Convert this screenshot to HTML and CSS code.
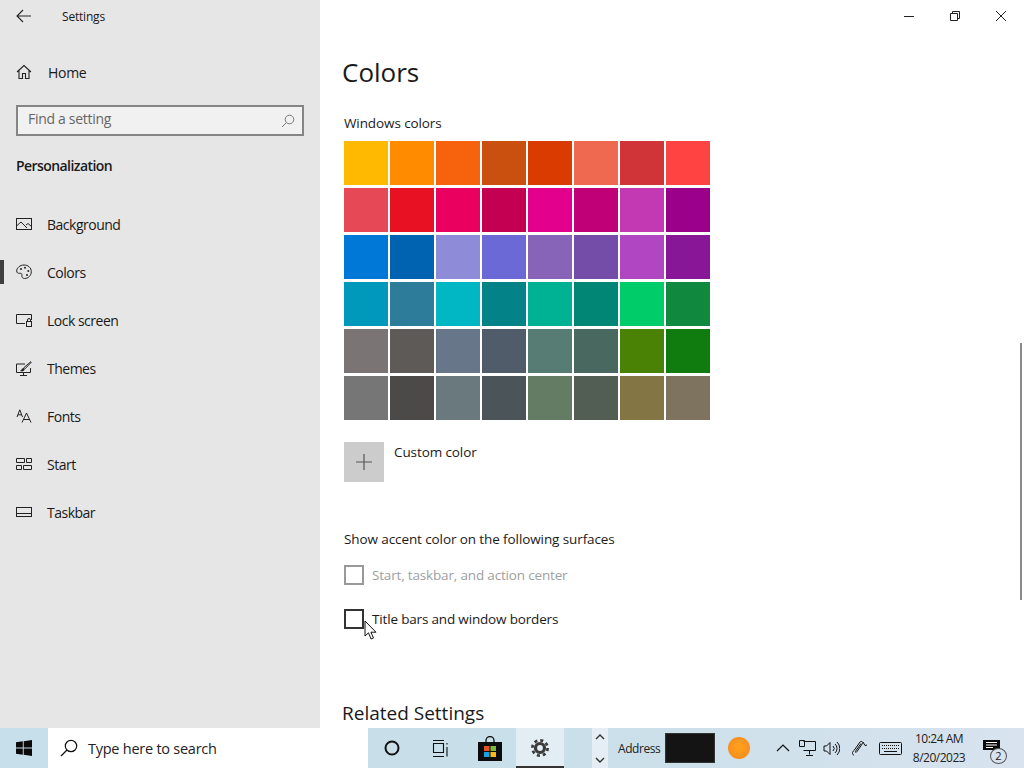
FILE: index.html
```html
<!DOCTYPE html>
<html lang="en">
<head>
<meta charset="utf-8">
<title>Settings</title>
<link rel="stylesheet" href="styles.css">
</head>
<body>
<div class="screen">
  <div class="window">
    <aside class="sidebar">
      <div class="appbar">
        <svg class="back" width="16" height="14" viewBox="0 0 16 14"><path d="M7 1 1 7l6 6M1 7h14" fill="none" stroke="#222" stroke-width="1.1"/></svg>
        <span class="apptitle">Settings</span>
      </div>
      <div class="nav-row home">
        <svg class="ico" width="16" height="16" viewBox="0 0 16 16"><path d="M1 8 8 1.500 15 8M3 6.500V14.500h3.500V9.500h3V14.500H13V6.500" fill="none" stroke="#222" stroke-width="1.1"/></svg>
        <span>Home</span>
      </div>
      <div class="search">
        <span class="search-text">Find a setting</span>
        <svg width="14" height="14" viewBox="0 0 14 14"><circle cx="8.500" cy="5.500" r="4.300" fill="none" stroke="#777"/><path d="M5.500 8.500 1 13" stroke="#777"/></svg>
      </div>
      <h2 class="group">Personalization</h2>
      <nav class="nav">
        <div class="nav-row">
          <svg class="ico" width="16" height="12" viewBox="0 0 16 12"><rect x=".5" y=".5" width="15" height="11" fill="none" stroke="#222"/><path d="M.5 8 5 4l6 6M10 7l2-1.500 3.500 3" fill="none" stroke="#222"/></svg>
          <span>Background</span>
        </div>
        <div class="nav-row active">
          <svg class="ico" width="16" height="16" viewBox="0 0 16 16"><path d="M8 1C4 1 .7 3.800.7 7c0 2 1.600 2.500 3 2.300 1.500-.2 2.500.5 2.200 2-.3 1.800.7 3.200 2.600 3.200 3.800 0 6.800-3 6.800-6.800C15.300 3.500 12 1 8 1Z" fill="none" stroke="#222"/><circle cx="5" cy="5" r="1" fill="#222"/><circle cx="9" cy="3.800" r="1" fill="#222"/><circle cx="12.300" cy="7" r="1" fill="#222"/><circle cx="11" cy="11" r="1" fill="#222"/></svg>
          <span>Colors</span>
        </div>
        <div class="nav-row">
          <svg class="ico" width="16" height="13" viewBox="0 0 16 13"><path d="M9 9.500H.5V.5h15V6" fill="none" stroke="#222"/><rect x="10.500" y="7.500" width="5" height="5" fill="none" stroke="#222"/><path d="M11.500 7.500V6a1.500 1.500 0 0 1 3 0v1.500" fill="none" stroke="#222"/></svg>
          <span>Lock screen</span>
        </div>
        <div class="nav-row">
          <svg class="ico" width="16" height="15" viewBox="0 0 16 15"><path d="M9 3H.5v8.500h14V7M7.500 11.500v3M4 14.500h7" fill="none" stroke="#222"/><path d="M15 .5 8 6.500 6 9.500l3.200-1.800L15.500 1" fill="none" stroke="#222"/><path d="M4 10l3-3 1.500 2-2 1.500Z" fill="#222"/></svg>
          <span>Themes</span>
        </div>
        <div class="nav-row">
          <svg class="ico" width="16" height="14" viewBox="0 0 16 14"><path d="M1 8 3.800.8 6.500 8M2 5.800h3.600M6 13.500 10.500 4 15 13.500M7.500 10.500h6" fill="none" stroke="#222"/></svg>
          <span>Fonts</span>
        </div>
        <div class="nav-row">
          <svg class="ico" width="16" height="12" viewBox="0 0 16 12"><path d="M.5.500h8v4h-8ZM10.500.500h5v4h-5ZM.5 7.500h5v4h-5ZM7.500 7.500h8v4h-8Z" fill="none" stroke="#222"/></svg>
          <span>Start</span>
        </div>
        <div class="nav-row">
          <svg class="ico" width="16" height="10" viewBox="0 0 16 10"><rect x=".5" y=".5" width="15" height="9" fill="none" stroke="#222"/><path d="M.5 6.500h15" stroke="#222"/></svg>
          <span>Taskbar</span>
        </div>
      </nav>
    </aside>
    <main class="content">
      <div class="controls">
        <svg width="12" height="12" viewBox="0 0 12 12"><path d="M1 6.500h10" stroke="#222"/></svg>
        <svg width="12" height="12" viewBox="0 0 12 12"><path d="M1.500 3.500h7v7h-7ZM3.500 3.500v-2h7v7h-2" fill="none" stroke="#222"/></svg>
        <svg width="12" height="12" viewBox="0 0 12 12"><path d="M1 1l10 10M11 1 1 11" stroke="#222"/></svg>
      </div>
      <h1 class="title">Colors</h1>
      <p class="label">Windows colors</p>
      <div class="swatches">
        <i class="s-ffb900"></i><i class="s-ff8c00"></i><i class="s-f7630c"></i><i class="s-ca5010"></i><i class="s-da3b01"></i><i class="s-ef6950"></i><i class="s-d13438"></i><i class="s-ff4343"></i>
        <i class="s-e74856"></i><i class="s-e81123"></i><i class="s-ea005e"></i><i class="s-c30052"></i><i class="s-e3008c"></i><i class="s-bf0077"></i><i class="s-c239b3"></i><i class="s-9a0089"></i>
        <i class="s-0078d7"></i><i class="s-0063b1"></i><i class="s-8e8cd8"></i><i class="s-6b69d6"></i><i class="s-8764b8"></i><i class="s-744da9"></i><i class="s-b146c2"></i><i class="s-881798"></i>
        <i class="s-0099bc"></i><i class="s-2d7d9a"></i><i class="s-00b7c3"></i><i class="s-038387"></i><i class="s-00b294"></i><i class="s-018574"></i><i class="s-00cc6a"></i><i class="s-10893e"></i>
        <i class="s-7a7574"></i><i class="s-5d5a58"></i><i class="s-68768a"></i><i class="s-515c6b"></i><i class="s-567c73"></i><i class="s-486860"></i><i class="s-498205"></i><i class="s-107c10"></i>
        <i class="s-767676"></i><i class="s-4c4a48"></i><i class="s-69797e"></i><i class="s-4a5459"></i><i class="s-647c64"></i><i class="s-525e54"></i><i class="s-847545"></i><i class="s-7e735f"></i>
      </div>
      <div class="custom">
        <div class="plus"><svg width="18" height="18" viewBox="0 0 18 18"><path d="M9 1v16M1 9h16" stroke="#555" stroke-width="1.200"/></svg></div>
        <span>Custom color</span>
      </div>
      <p class="label surfaces">Show accent color on the following surfaces</p>
      <div class="check disabled"><b></b><span>Start, taskbar, and action center</span></div>
      <div class="check pointer-host"><b></b><span>Title bars and window borders</span>
        <svg class="cursor" width="13" height="21" viewBox="0 0 13 21"><path d="M1 1v15l3.500-3.200L7 19l2.500-1-2.600-5.800H12Z" fill="#fff" stroke="#111"/></svg>
      </div>
      <h2 class="related">Related Settings</h2>
      <div class="scrollbar"></div>
    </main>
  </div>
  <footer class="taskbar">
    <div class="start">
      <svg width="16" height="16" viewBox="0 0 16 16"><path d="M0 2.300 6.800 1.300V7.500H0ZM7.700 1.200 16 0V7.500H7.700ZM0 8.400H6.800V14.700L0 13.700ZM7.700 8.400H16V16L7.700 14.800Z" fill="#0a0a0a"/></svg>
    </div>
    <div class="tsearch">
      <svg width="18" height="18" viewBox="0 0 18 18"><circle cx="11" cy="7" r="5.700" fill="none" stroke="#111" stroke-width="1.200"/><path d="M7 11 1 17" stroke="#111" stroke-width="1.200"/></svg>
      <span>Type here to search</span>
    </div>
    <div class="tb-btn"><svg width="16" height="16" viewBox="0 0 16 16"><circle cx="8" cy="8" r="6.500" fill="none" stroke="#111" stroke-width="2"/></svg></div>
    <div class="tb-btn"><svg width="17" height="17" viewBox="0 0 17 17"><path d="M1 .5h11M1 16.500h11M1.500 3.500h10v9h-10Z M15 3v1.500M15 7v9.500" fill="none" stroke="#111" stroke-width="1.100"/></svg></div>
    <div class="tb-btn store"><svg width="24" height="25" viewBox="0 0 24 25"><path d="M8 7V4.500a4 4 0 0 1 8 0V7" fill="none" stroke="#111" stroke-width="1.300"/><path d="M0 6h24v19H0Z" fill="#0c0c0c"/><rect x="6" y="10" width="5.500" height="5" fill="#e8502a"/><rect x="12.500" y="10" width="5.500" height="5" fill="#7cb83a"/><rect x="6" y="16" width="5.500" height="5" fill="#1ba1e2"/><rect x="12.500" y="16" width="5.500" height="5" fill="#f6b81c"/></svg></div>
    <div class="tb-btn current"><svg width="18" height="18" viewBox="0 0 20 20"><circle cx="10" cy="10" r="5" fill="none" stroke="#3a3a3a" stroke-width="3.600"/><circle cx="10" cy="10" r="8.500" fill="none" stroke="#3a3a3a" stroke-width="3" stroke-dasharray="3.400 3.280"/></svg></div>
    <div class="tb-gap"></div>
    <div class="tb-arrows">
      <svg width="10" height="7" viewBox="0 0 10 7"><path d="M1 6l4-4 4 4" fill="none" stroke="#333" stroke-width="1.400"/></svg>
      <svg width="10" height="7" viewBox="0 0 10 7"><path d="M1 1l4 4 4-4" fill="none" stroke="#333" stroke-width="1.400"/></svg>
    </div>
    <div class="address"><span>Address</span><div class="addr-box"></div></div>
    <div class="orb"></div>
    <div class="tray">
      <svg class="t-caret" width="14" height="8" viewBox="0 0 14 8"><path d="M1 7l6-6 6 6" fill="none" stroke="#111" stroke-width="1.200"/></svg>
      <svg class="t-net" width="17" height="16" viewBox="0 0 17 16"><path d="M4.500 1.500h12v9h-12M.5.500h5v6h-5ZM10.500 10.500v4M7 15.500h7" fill="none" stroke="#111"/></svg>
      <svg class="t-vol" width="17" height="15" viewBox="0 0 17 15"><path d="M1 5h2.500L7 1.500v12L3.500 10H1ZM10 5a3.500 3.500 0 0 1 0 5M12 3a6 6 0 0 1 0 9M14 1a9 9 0 0 1 0 13" fill="none" stroke="#111"/></svg>
      <svg class="t-pen" width="17" height="16" viewBox="0 0 17 16"><path d="M3 15.500C1 14 1 12 3 10.500l6-8.500c1.500-1.500 3.500 0 2.500 1.500L6 11.500C5 13 3.500 12.500 5 10.500l5-7M12 2l2 3.500 2-.5" fill="none" stroke="#111"/></svg>
      <svg class="t-key" width="23" height="13" viewBox="0 0 23 13"><rect x=".5" y=".5" width="22" height="12" rx="1" fill="none" stroke="#111"/><path d="M3 3.500h17M3 6.500h17" stroke="#111" stroke-dasharray="1 1"/><path d="M5 9.500h13" stroke="#111"/></svg>
    </div>
    <div class="clock"><span>10:24 AM</span><span>8/20/2023</span></div>
    <div class="notif">
      <svg width="17" height="14" viewBox="0 0 17 14"><path d="M0 0h17v10h-3v4l-4-4H0Z" fill="#0a0a0a"/><path d="M3 2.500h11M3 5h11M3 7.500h7" stroke="#fff"/></svg>
      <span class="badge">2</span>
    </div>
  </footer>
</div>
</body>
</html>
```
FILE: styles.css
```css
* { box-sizing: border-box; }
html, body { margin: 0; padding: 0; }
body { font-family: "Open Sans", "Noto Sans", "Liberation Sans", sans-serif; color: #1a1a1a; background: #fff; }
.screen { width: 1024px; height: 768px; overflow: hidden; display: flex; flex-direction: column; }
.window { flex: 0 0 728px; display: flex; height: 728px; overflow: hidden; }

.sidebar { flex: 0 0 320px; background: #e6e6e6; display: flex; flex-direction: column; }
.appbar { height: 33px; display: flex; align-items: center; padding-left: 16px; }
.back { margin-top: -2px; }
.apptitle { margin-left: 30px; font-size: 12px; letter-spacing: -.2px; }
.nav-row { height: 48px; display: flex; align-items: center; padding-left: 16px; font-size: 14px; letter-spacing: -.5px; position: relative; }
.nav-row .ico { flex: 0 0 16px; margin-right: 15px; }
.home { margin-top: 15px; letter-spacing: -.3px; }
.home .ico { margin-right: 16px; }
.search { margin: 9px 16px 0; height: 31px; border: 2px solid #858585; background: #f1f1f1; display: flex; align-items: center; justify-content: space-between; padding: 0 7px 0 10px; font-size: 14px; letter-spacing: -.3px; color: #666; }
.search-text { margin-top: -4px; }
.group { margin: 20px 16px 0; font-size: 14px; font-weight: 600; line-height: 20px; letter-spacing: -.57px; }
.nav { margin-top: 24px; display: flex; flex-direction: column; }
.active::before { content: ""; position: absolute; left: 0; top: 12px; width: 4px; height: 24px; background: #3f3f3f; }

.content { flex: 1; position: relative; padding: 0 0 0 24px; background: #fff; overflow: hidden; }
.controls { position: absolute; top: 10px; right: 17px; display: flex; gap: 34px; }
.title { margin: 53px 0 0 -2px; font-size: 26px; line-height: 38px; font-weight: 400; letter-spacing: 0; }
.label { margin: 0; font-size: 13.500px; line-height: 20px; letter-spacing: -.1px; }
.title + .label { margin-top: 22px; }
.swatches { margin-top: 8px; display: grid; grid-template-columns: repeat(8, 44px); grid-auto-rows: 44px; column-gap: 2px; row-gap: 3px; }
.swatches i { display: block; }
.s-ffb900{background:#ffb900}.s-ff8c00{background:#ff8c00}.s-f7630c{background:#f7630c}.s-ca5010{background:#ca5010}.s-da3b01{background:#da3b01}.s-ef6950{background:#ef6950}.s-d13438{background:#d13438}.s-ff4343{background:#ff4343}
.s-e74856{background:#e74856}.s-e81123{background:#e81123}.s-ea005e{background:#ea005e}.s-c30052{background:#c30052}.s-e3008c{background:#e3008c}.s-bf0077{background:#bf0077}.s-c239b3{background:#c239b3}.s-9a0089{background:#9a0089}
.s-0078d7{background:#0078d7}.s-0063b1{background:#0063b1}.s-8e8cd8{background:#8e8cd8}.s-6b69d6{background:#6b69d6}.s-8764b8{background:#8764b8}.s-744da9{background:#744da9}.s-b146c2{background:#b146c2}.s-881798{background:#881798}
.s-0099bc{background:#0099bc}.s-2d7d9a{background:#2d7d9a}.s-00b7c3{background:#00b7c3}.s-038387{background:#038387}.s-00b294{background:#00b294}.s-018574{background:#018574}.s-00cc6a{background:#00cc6a}.s-10893e{background:#10893e}
.s-7a7574{background:#7a7574}.s-5d5a58{background:#5d5a58}.s-68768a{background:#68768a}.s-515c6b{background:#515c6b}.s-567c73{background:#567c73}.s-486860{background:#486860}.s-498205{background:#498205}.s-107c10{background:#107c10}
.s-767676{background:#767676}.s-4c4a48{background:#4c4a48}.s-69797e{background:#69797e}.s-4a5459{background:#4a5459}.s-647c64{background:#647c64}.s-525e54{background:#525e54}.s-847545{background:#847545}.s-7e735f{background:#7e735f}

.custom { margin-top: 22px; display: flex; align-items: flex-start; gap: 10px; font-size: 13.500px; letter-spacing: -.1px; }
.custom span { line-height: 20px; }
.plus { width: 40px; height: 40px; background: #ccc; display: flex; align-items: center; justify-content: center; }
.surfaces { margin-top: 47px; }
.check { margin-top: 12px; height: 28px; display: flex; align-items: center; gap: 8px; font-size: 13.500px; letter-spacing: -.17px; position: relative; }
.check + .check { margin-top: 16px; }
.check b { flex: 0 0 20px; height: 20px; border: 2px solid #333; background: #fff; }
.disabled { color: #a0a0a0; }
.disabled b { border-color: #999; }
.cursor { position: absolute; left: 20px; top: 15px; }
.related { margin: 66px 0 0 -2px; font-size: 19px; line-height: 28px; font-weight: 400; letter-spacing: 0; }
.scrollbar { position: absolute; right: 2px; top: 343px; width: 2px; height: 257px; background: #8a8a8a; }

.taskbar { flex: 0 0 40px; height: 40px; display: flex; align-items: stretch; background: linear-gradient(90deg, #c7dfea 0%, #c9dfe9 55%, #d8e3ef 100%); font-size: 13px; }
.start { flex: 0 0 48px; display: flex; align-items: center; justify-content: center; }
.tsearch { flex: 0 0 320px; background: #fff; display: flex; align-items: center; gap: 10px; padding-left: 12px; font-size: 14.500px; letter-spacing: -.25px; color: #222; }
.tb-btn { flex: 0 0 48px; display: flex; align-items: center; justify-content: center; }
.tb-btn.store { flex-basis: 52px; }
.tb-btn.current { background: #e3eef4; border-bottom: 2px solid #333; padding-top: 2px; }
.tb-gap { flex: 0 0 28px; }
.tb-arrows { flex: 0 0 16px; background: #e4eef4; display: flex; flex-direction: column; align-items: center; justify-content: space-between; padding: 5px 0 4px; }
.address { flex: 0 0 108px; display: flex; align-items: center; gap: 5px; padding-left: 10px; font-size: 12px; letter-spacing: -.45px; color: #222; }
.addr-box { width: 50px; height: 30px; background: #141414; border: 1px solid #333; }
.orb { flex: 0 0 22px; height: 22px; align-self: center; margin-left: 12px; border-radius: 50%; background: radial-gradient(circle at 50% 45%, #ffa21f, #f5861e); }
.tray { flex: 0 0 126px; margin-left: 26px; display: flex; align-items: center; }
.t-net { margin-left: 9px; }
.t-vol { margin-left: 7px; }
.t-pen { margin-left: 11px; }
.t-key { margin-left: 11px; }
.clock { flex: 0 0 74px; display: flex; flex-direction: column; align-items: center; justify-content: center; font-size: 12px; line-height: 19px; letter-spacing: -.5px; color: #222; }
.notif { flex: 0 0 auto; margin-left: 7px; position: relative; display: flex; align-items: flex-start; padding-top: 12px; }
.badge { position: absolute; left: 7px; top: 20px; width: 17px; height: 16px; border-radius: 50%; border: 1px solid #555; background: #d8e3ef; font-size: 11px; line-height: 14px; text-align: center; }
```
